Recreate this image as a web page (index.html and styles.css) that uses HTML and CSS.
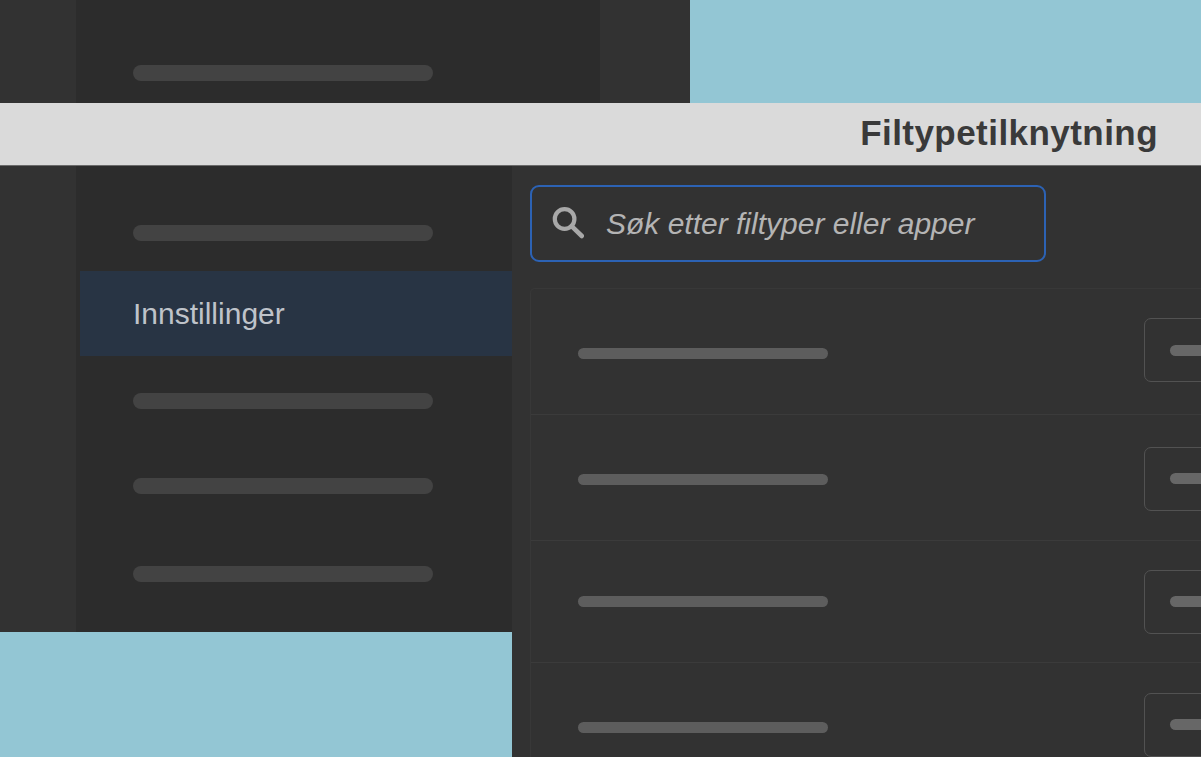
FILE: index.html
```html
<!DOCTYPE html>
<html lang="no">
<head>
<meta charset="utf-8">
<title>Filtypetilknytning</title>
<link rel="stylesheet" href="styles.css">
</head>
<body>
<div class="page">
  <header class="top">
    <div class="rail"></div>
    <div class="top-side"><span class="pill"></span></div>
    <div class="top-gap"></div>
    <div class="sky"></div>
  </header>
  <div class="band"><h1 class="title">Filtypetilknytning</h1></div>
  <div class="body">
    <div class="left">
      <div class="left-main">
        <div class="rail"></div>
        <nav class="side">
          <div class="side-row r1"><span class="pill"></span></div>
          <div class="side-active">Innstillinger</div>
          <div class="side-row r2"><span class="pill"></span></div>
          <div class="side-row r3"><span class="pill"></span></div>
          <div class="side-row r4"><span class="pill"></span></div>
        </nav>
      </div>
      <div class="sky"></div>
    </div>
    <main class="content">
      <div class="search">
        <svg class="search-icon" viewBox="0 0 32 32" width="32" height="32" aria-hidden="true">
          <circle cx="12.6" cy="12" r="9.8" fill="none" stroke="#a8a8a8" stroke-width="4.2"/>
          <path d="M19.6 19.2L29.8 29" fill="none" stroke="#a8a8a8" stroke-width="4.6" stroke-linecap="round"/>
        </svg>
        <span class="search-text">Søk etter filtyper eller apper</span>
      </div>
      <div class="list">
        <div class="item i1"><span class="bar"></span><span class="btn"><span class="btn-bar"></span></span></div>
        <div class="item i2"><span class="bar"></span><span class="btn"><span class="btn-bar"></span></span></div>
        <div class="item i3"><span class="bar"></span><span class="btn"><span class="btn-bar"></span></span></div>
        <div class="item i4"><span class="bar"></span><span class="btn"><span class="btn-bar"></span></span></div>
      </div>
    </main>
  </div>
</div>
</body>
</html>
```
FILE: styles.css
```css
* { box-sizing: border-box; }
html, body { margin: 0; padding: 0; height: 100%; overflow: hidden; }
body { background: #323232; font-family: "Liberation Sans", Arial, sans-serif; }
.page { width: 1201px; height: 757px; display: flex; flex-direction: column; overflow: hidden; }

.top { height: 103px; display: flex; flex: none; }
.rail { width: 76px; flex: none; background: #323232; }
.top-side { width: 524px; flex: none; background: #2c2c2c; padding: 65px 0 0 57px; }
.top-gap { width: 90px; flex: none; background: #323232; }
.sky { flex: 1; background: #93c6d4; }

.pill { display: block; width: 300px; height: 16px; border-radius: 8px; background: #434343; }

.band { height: 63px; flex: none; background: #dadada; border-bottom: 1px solid #6a6a6a; display: flex; justify-content: flex-end; align-items: center; padding: 0 43px 2px 0; }
.title { margin: 0; font-size: 35px; line-height: 40px; font-weight: 700; letter-spacing: 0.45px; color: #3a3a3a; }

.body { flex: 1; display: flex; min-height: 0; }
.left { width: 512px; flex: none; display: flex; flex-direction: column; }
.left-main { height: 466px; flex: none; display: flex; }
.side { flex: 1; background: #2c2c2c; }
.side-row { padding-left: 57px; }
.r1 { height: 105px; padding-top: 59px; }
.r2 { height: 85px; padding-top: 37px; }
.r3 { height: 88px; padding-top: 37px; }
.r4 { padding-top: 37px; }
.side-active { height: 85px; margin-left: 4px; background: #283444; color: #bfc3ca; font-size: 30px; line-height: 86px; padding-left: 53px; }
.left .sky { flex: 1; }

.content { flex: 1; background: #323232; padding: 19px 0 0 18px; min-width: 0; }
.search { width: 516px; height: 77px; border: 2px solid #2c62b4; border-radius: 9px; display: flex; align-items: center; padding: 0 0 2px 20px; }
.search-icon { flex: none; width: 32px; height: 32px; }
.search-text { margin: 2px 0 0 22px; font-size: 30px; font-style: italic; color: #b4b4b4; white-space: nowrap; }

.list { margin-top: 26px; border: 1px solid #383838; border-right: 0; border-bottom: 0; border-radius: 5px 0 0 0; }
.item { display: flex; align-items: flex-start; padding-left: 47px; border-bottom: 1px solid #3b3b3b; }
.i1 { height: 126px; }
.i2 { height: 126px; }
.i3 { height: 122px; }
.i4 { height: 130px; border-bottom: 0; }
.bar { display: block; flex: none; width: 250px; height: 11px; border-radius: 6px; background: #5d5d5d; }
.btn { display: block; flex: none; margin-left: 316px; width: 120px; height: 64px; border: 1px solid #525252; border-radius: 7px; padding: 25px 0 0 25px; }
.btn-bar { display: block; width: 90px; height: 11px; border-radius: 6px; background: #676767; }
.i1 .bar { margin-top: 59px; }
.i1 .btn { margin-top: 29px; padding-top: 26px; }
.i2 .bar { margin-top: 59px; }
.i2 .btn { margin-top: 32px; }
.i3 .bar { margin-top: 55px; }
.i3 .btn { margin-top: 29px; }
.i4 .bar { margin-top: 59px; }
.i4 .btn { margin-top: 30px; }
```
